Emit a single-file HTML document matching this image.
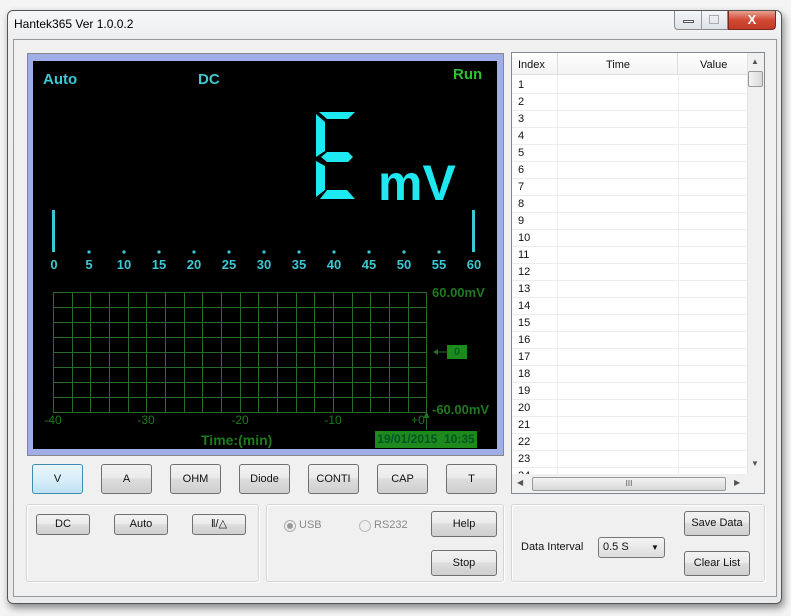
<!DOCTYPE html>
<html><head><style>
*{margin:0;padding:0;box-sizing:border-box}
body{width:791px;height:616px;background:#f4f4f4;position:relative;overflow:hidden;font-family:"Liberation Sans",sans-serif;font-size:11px;color:#111}
.a{position:absolute}
.win{left:7px;top:10px;width:775px;height:594px;background:linear-gradient(#f6f7f8,#eceef0 30px,#e8eaec);border:1px solid #555;border-radius:6px;box-shadow:2px 4px 8px rgba(0,0,0,.45)}
.client{left:13px;top:39px;width:764px;height:558px;background:#f0f0f0;border:1px solid #999}
.btn{position:absolute;border:1px solid #707070;border-radius:3px;background:linear-gradient(#f2f2f2,#ebebeb 45%,#dddddd 50%,#cfcfcf);text-align:center;font-size:11px;color:#111}
.grp{position:absolute;border:1px solid #d5d5d5;border-radius:3px;box-shadow:inset 1px 1px 0 #fff,1px 1px 0 #fff}
.cy{color:#3cc8d4;font-weight:bold;position:absolute}
.gr{color:#1f7a1f;font-weight:bold;position:absolute;font-size:13px}
.row{position:absolute;left:0;width:235px;height:17px;border-bottom:1px solid #ececec;font-size:11px;padding-left:6px;line-height:17px}
</style></head><body>
<div class="a win"></div>
<div class="a" style="left:14px;top:17px;font-size:12px;color:#000">Hantek365 Ver 1.0.0.2</div>
<div class="a" style="left:674px;top:11px;width:54px;height:19px;border:1px solid #8a8a8a;border-top:none;border-radius:0 0 0 4px;background:linear-gradient(#f4f6f8,#dde2e8)"></div>
<div class="a" style="left:683px;top:20px;width:11px;height:3px;border:1px solid #555;background:#fff"></div>
<div class="a" style="left:701px;top:11px;width:1px;height:19px;background:#999"></div>
<div class="a" style="left:709px;top:15px;width:10px;height:9px;border:1px solid #aaa"></div>
<div class="a" style="left:728px;top:11px;width:48px;height:19px;border:1px solid #7a2a20;border-top:none;border-radius:0 0 4px 0;background:linear-gradient(#e8a090,#d24a34 50%,#c03a28);color:#fff;font-weight:bold;text-align:center;font-size:13px;line-height:17px">X</div>
<div class="a client"></div>

<!-- display -->
<div class="a" style="left:27px;top:53px;width:477px;height:403px;border:1px solid #888;background:#a0aee8"></div>
<div class="a" style="left:33px;top:61px;width:464px;height:388px;background:#000"></div>
<div class="cy" style="left:43px;top:71px;font-size:15px">Auto</div>
<div class="cy" style="left:198px;top:71px;font-size:15px">DC</div>
<div class="a" style="left:453px;top:66px;font-size:15px;font-weight:bold;color:#2ec02e">Run</div>
<svg class="a" style="left:0;top:0" width="791" height="616">
<g fill="#1ee8f0">
<polygon points="319,112 355,112 348,119 327,119"/>
<polygon points="316,114 325,122 325,151 316,157"/>
<polygon points="321,157 327,152 348,152 353,157 348,162 327,162"/>
<polygon points="316,161 325,166 325,190 316,197"/>
<polygon points="327,190 347,190 355,199 320,199"/>
</g>
<g fill="#3cc8d4"><rect x="52" y="210" width="3" height="42"/><rect x="472" y="210" width="3" height="42"/></g>
<g fill="#3cc8d4">
<circle cx="89" cy="252" r="1.6"/><circle cx="124" cy="252" r="1.6"/><circle cx="159" cy="252" r="1.6"/><circle cx="194" cy="252" r="1.6"/><circle cx="229" cy="252" r="1.6"/><circle cx="264" cy="252" r="1.6"/><circle cx="299" cy="252" r="1.6"/><circle cx="334" cy="252" r="1.6"/><circle cx="369" cy="252" r="1.6"/><circle cx="404" cy="252" r="1.6"/><circle cx="439" cy="252" r="1.6"/>
</g>
<g fill="#3cc8d4" font-family="Liberation Sans" font-weight="bold" font-size="13" text-anchor="middle">
<text x="54" y="269">0</text><text x="89" y="269">5</text><text x="124" y="269">10</text><text x="159" y="269">15</text><text x="194" y="269">20</text><text x="229" y="269">25</text><text x="264" y="269">30</text><text x="299" y="269">35</text><text x="334" y="269">40</text><text x="369" y="269">45</text><text x="404" y="269">50</text><text x="439" y="269">55</text><text x="474" y="269">60</text>
</g>
<g stroke="#2a6a2a" stroke-width="1">
<path d="M53.5 292.5H426.5M53.5 307.5H426.5M53.5 322.5H426.5M53.5 337.5H426.5M53.5 352.5H426.5M53.5 367.5H426.5M53.5 382.5H426.5M53.5 397.5H426.5M53.5 412.5H426.5"/>
<path d="M53.5 292V413M72.5 292V413M90.5 292V413M109.5 292V413M128.5 292V413M146.5 292V413M165.5 292V413M184.5 292V413M202.5 292V413M221.5 292V413M240.5 292V413M258.5 292V413M277.5 292V413M296.5 292V413M314.5 292V413M333.5 292V413M352.5 292V413M370.5 292V413M389.5 292V413M408.5 292V413M426.5 292V413"/>
<path d="M426.5 412V430M438 352H447"/>
</g>
<polygon points="433,352 438,349 438,355" fill="#2a6a2a"/>
<polygon points="426.5,411 423.5,418 429.5,418" fill="#2a6a2a"/>
<g fill="#1f7a1f" font-family="Liberation Sans" font-size="12" text-anchor="middle">
<text x="53" y="424">-40</text><text x="146" y="424">-30</text><text x="240" y="424">-20</text><text x="333" y="424">-10</text><text x="418" y="424">+0</text>
</g>
</svg>
<div class="gr" style="left:432px;top:285px;font-size:13px">60.00mV</div>
<div class="gr" style="left:432px;top:402px;font-size:13px">-60.00mV</div>
<div class="a" style="left:447px;top:345px;width:20px;height:14px;background:#1e8a1e;color:#062;font-weight:bold;font-size:11px;text-align:center;line-height:14px">0</div>
<div class="gr" style="left:201px;top:432px;font-size:14px">Time:(min)</div>
<div class="a" style="left:375px;top:431px;width:102px;height:17px;background:#1e8a1e;color:#052;font-weight:bold;font-size:12px;line-height:17px;text-align:center">19/01/2015&nbsp; 10:35</div>
<div class="a" style="left:378px;top:158px;font-size:50px;font-weight:bold;color:#1ee8f0;line-height:50px">mV</div>

<!-- mode buttons -->
<div class="btn" style="left:32px;top:464px;width:51px;height:30px;line-height:28px;border-color:#3c8cb4;background:linear-gradient(#eaf6fc,#d8eef9 50%,#bfe2f4)">V</div>
<div class="btn" style="left:101px;top:464px;width:51px;height:30px;line-height:28px">A</div>
<div class="btn" style="left:170px;top:464px;width:51px;height:30px;line-height:28px">OHM</div>
<div class="btn" style="left:239px;top:464px;width:51px;height:30px;line-height:28px">Diode</div>
<div class="btn" style="left:308px;top:464px;width:51px;height:30px;line-height:28px">CONTI</div>
<div class="btn" style="left:377px;top:464px;width:51px;height:30px;line-height:28px">CAP</div>
<div class="btn" style="left:446px;top:464px;width:51px;height:30px;line-height:28px">T</div>

<div class="grp" style="left:26px;top:504px;width:233px;height:78px"></div>
<div class="grp" style="left:266px;top:504px;width:238px;height:78px"></div>
<div class="grp" style="left:511px;top:504px;width:254px;height:78px"></div>
<div class="btn" style="left:36px;top:514px;width:54px;height:21px;line-height:19px">DC</div>
<div class="btn" style="left:114px;top:514px;width:54px;height:21px;line-height:19px">Auto</div>
<div class="btn" style="left:192px;top:514px;width:54px;height:21px;line-height:19px">‖/△</div>
<div class="a" style="left:284px;top:520px;width:12px;height:12px;border:1px solid #aaa;border-radius:50%;background:#eee"><div class="a" style="left:2px;top:2px;width:6px;height:6px;border-radius:50%;background:#999"></div></div>
<div class="a" style="left:299px;top:519px;color:#888">USB</div>
<div class="a" style="left:359px;top:520px;width:12px;height:12px;border:1px solid #bbb;border-radius:50%;background:#eee"></div>
<div class="a" style="left:374px;top:519px;color:#888">RS232</div>
<div class="btn" style="left:431px;top:511px;width:66px;height:26px;line-height:24px">Help</div>
<div class="btn" style="left:431px;top:550px;width:66px;height:26px;line-height:24px">Stop</div>

<!-- table -->
<div class="a" style="left:511px;top:52px;width:254px;height:442px;border:1px solid #828790;background:#fff;overflow:hidden">
 <div class="a" style="left:0;top:0;width:235px;height:22px;background:linear-gradient(#fff,#f3f3f3);border-bottom:1px solid #e0e0e0"></div>
 <div class="a" style="left:45px;top:0;width:1px;height:22px;background:#ddd"></div>
 <div class="a" style="left:165px;top:0;width:1px;height:22px;background:#ddd"></div>
 <div class="a" style="left:6px;top:6px">Index</div>
 <div class="a" style="left:94px;top:6px">Time</div>
 <div class="a" style="left:188px;top:6px">Value</div>
 <div class="a" style="left:45px;top:22px;width:1px;height:400px;background:#eee"></div>
 <div class="a" style="left:166px;top:22px;width:1px;height:400px;background:#eee"></div>
 <div class="row" style="top:24px">1</div><div class="row" style="top:41px">2</div><div class="row" style="top:58px">3</div><div class="row" style="top:75px">4</div><div class="row" style="top:92px">5</div><div class="row" style="top:109px">6</div><div class="row" style="top:126px">7</div><div class="row" style="top:143px">8</div><div class="row" style="top:160px">9</div><div class="row" style="top:177px">10</div><div class="row" style="top:194px">11</div><div class="row" style="top:211px">12</div><div class="row" style="top:228px">13</div><div class="row" style="top:245px">14</div><div class="row" style="top:262px">15</div><div class="row" style="top:279px">16</div><div class="row" style="top:296px">17</div><div class="row" style="top:313px">18</div><div class="row" style="top:330px">19</div><div class="row" style="top:347px">20</div><div class="row" style="top:364px">21</div><div class="row" style="top:381px">22</div><div class="row" style="top:398px">23</div><div class="row" style="top:415px">24</div>
 <div class="a" style="left:235px;top:0;width:17px;height:421px;background:#f0f0f0;border-left:1px solid #e4e4e4"></div>
 <div class="a" style="left:239px;top:4px;font-size:8px;color:#555">▲</div>
 <div class="a" style="left:236px;top:18px;width:15px;height:16px;border:1px solid #999;border-radius:2px;background:linear-gradient(90deg,#f4f4f4,#d8d8d8)"></div>
 <div class="a" style="left:239px;top:406px;font-size:8px;color:#555">▼</div>
 <div class="a" style="left:0;top:421px;width:252px;height:19px;background:#f0f0f0"></div>
 <div class="a" style="left:5px;top:425px;font-size:8px;color:#555">◀</div>
 <div class="a" style="left:20px;top:424px;width:194px;height:14px;border:1px solid #999;border-radius:2px;background:linear-gradient(#f4f4f4,#d6d6d6);text-align:center;font-size:8px;line-height:12px;color:#555">III</div>
 <div class="a" style="left:222px;top:425px;font-size:8px;color:#555">▶</div>
</div>
<div class="a" style="left:521px;top:541px">Data Interval</div>
<div class="a" style="left:598px;top:537px;width:67px;height:21px;border:1px solid #777;border-radius:3px;background:linear-gradient(#f4f4f4,#dcdcdc);font-size:11px;line-height:19px;padding-left:4px">0.5 S<span class="a" style="left:52px;top:0;font-size:8px">▼</span></div>
<div class="btn" style="left:684px;top:511px;width:66px;height:25px;line-height:23px">Save Data</div>
<div class="btn" style="left:684px;top:551px;width:66px;height:25px;line-height:23px">Clear List</div>
</body></html>
